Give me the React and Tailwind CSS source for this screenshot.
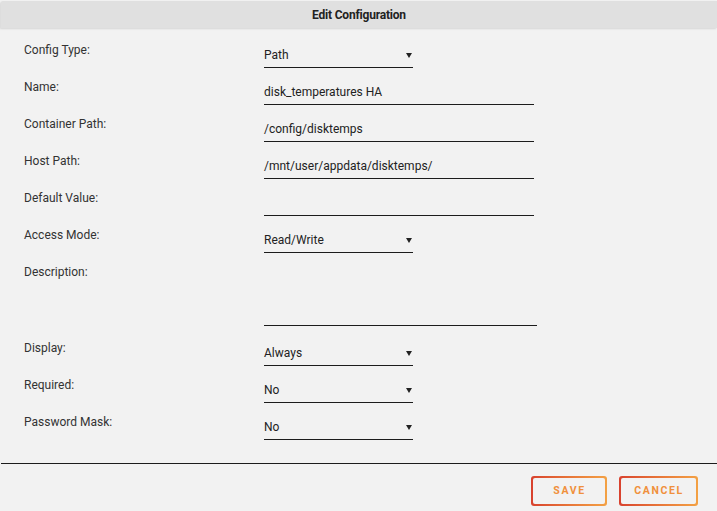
import React from "react";

const font = { fontFamily: "Roboto, 'Liberation Sans', sans-serif" };

function Arrow() {
  return (
    <svg className="absolute right-[1px] top-[6px]" width="6" height="5" viewBox="0 0 6 5">
      <polygon points="0,0 6,0 3,5" fill="#222" />
    </svg>
  );
}

function Select({ value }) {
  return (
    <div className="relative mt-[5px] w-[149px] h-[21px] border-b border-[#1c1c1c] text-[12px] leading-[16px] text-[#222]">
      {value}
      <Arrow />
    </div>
  );
}

function Text({ value, w = "w-[270px]" }) {
  return (
    <div className={`mt-[5px] ${w} h-[21px] border-b border-[#1c1c1c] text-[12px] leading-[16px] text-[#222]`}>
      {value}
    </div>
  );
}

function Row({ label, children, h = "h-[37px]" }) {
  return (
    <div className={`flex items-start ${h}`}>
      <div className="w-[264px] shrink-0 pl-[24px] text-[12px] leading-[16px] text-[#333]">{label}</div>
      {children}
    </div>
  );
}

function GradButton({ children, w }) {
  return (
    <div className={`${w} h-[30px] rounded-[3px] p-[2px] bg-gradient-to-r from-[#d8412e] to-[#f3a144]`}>
      <div className="w-full h-full rounded-[2px] bg-[#f2f2f2] flex items-center justify-center text-[10.5px] font-bold tracking-[1.6px] text-[#f0903c] pl-[1px]">
        {children}
      </div>
    </div>
  );
}

export default function App() {
  return (
    <div className="w-[717px] h-[511px] bg-[#f2f2f2] overflow-hidden" style={font}>
      <div className="pt-[1px] pl-[1px]">
        <div className="h-[27px] bg-[#e0e0e0] shadow-[-1px_1px_2px_rgba(0,0,0,0.12)] rounded-tl-[2px] flex items-center justify-center text-[12px] font-bold text-[#222] tracking-[-0.2px]">
          Edit Configuration
        </div>
      </div>
      <div className="pt-[14px]">
        <Row label="Config Type:"><Select value="Path" /></Row>
        <Row label="Name:"><Text value="disk_temperatures HA" /></Row>
        <Row label="Container Path:"><Text value="/config/disktemps" /></Row>
        <Row label="Host Path:"><Text value="/mnt/user/appdata/disktemps/" /></Row>
        <Row label="Default Value:"><Text value="" /></Row>
        <Row label="Access Mode:"><Select value="Read/Write" /></Row>
        <Row label="Description:" h="h-[76px]">
          <div className="mt-[5px] w-[273px] h-[57px] border-b border-[#1c1c1c]" />
        </Row>
        <Row label="Display:"><Select value="Always" /></Row>
        <Row label="Required:"><Select value="No" /></Row>
        <Row label="Password Mask:"><Select value="No" /></Row>
      </div>
      <div className="mt-[12px] ml-[1px] border-t border-[#1c1c1c]" />
      <div className="flex justify-end gap-[12px] pt-[12px] pr-[19px]">
        <GradButton w="w-[76px]">SAVE</GradButton>
        <GradButton w="w-[79px]">CANCEL</GradButton>
      </div>
    </div>
  );
}
